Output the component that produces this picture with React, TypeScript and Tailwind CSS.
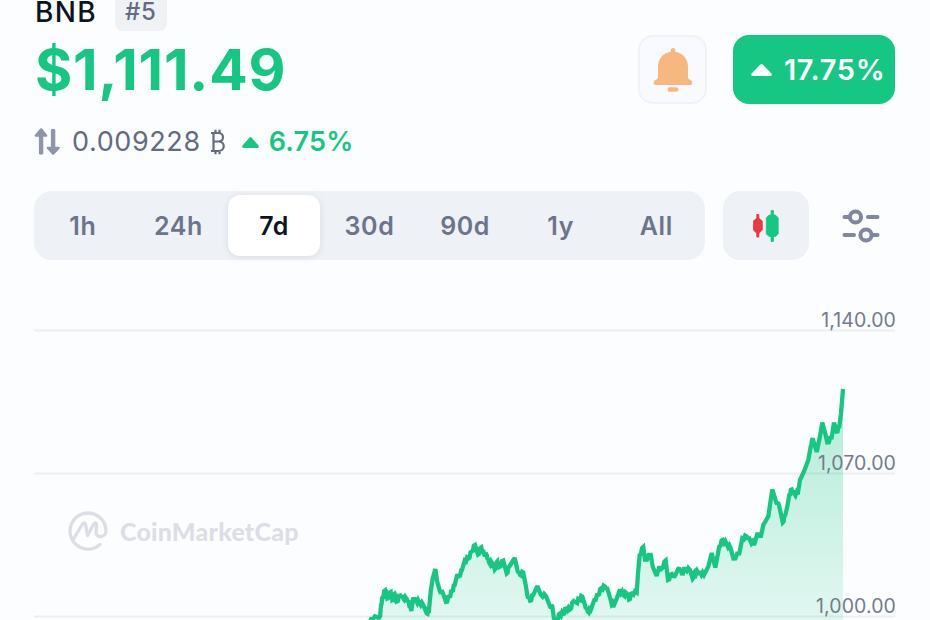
import { useState } from "react";

const ranges = ["1h", "24h", "7d", "30d", "90d", "1y", "All"];

const gridLines = [
  { label: "1,140.00", y: 330 },
  { label: "1,070.00", y: 473 },
  { label: "1,000.00", y: 616 },
];

const pricePoints = [
  "369,618.5 378,617.5 380,617.5 381,605 382.7,597 385,590.5 387.3,598.5 390.7,592 392.3,600 394.3,594 396.7,601.5 400,595.5",
  "402.7,597.5 406.7,599 409,603.5 411.3,611 413.3,597.5 416,600.5 419.3,602.5 423.3,605 426.7,613.5 429,610 430.7,591.5 432.7,578.5",
  "435.3,569 437.3,582 440,591.5 442.7,592.5 446,602 449.3,596.5 452,591 454.7,585 457.3,574.5 459.3,576 462,570 464.7,560.5",
  "468.3,558.5 471.7,551.5 475,545 478,554.5 481.3,547.5 484,554 486.7,555 489,562.5 492.3,563.5 494.7,569.5 497.3,561.5 499.3,567",
  "503.3,560.5 506.7,573.5 509.3,566.5 514.7,558 517.3,569.5 520,575 523.3,572.5 525.7,585 527.3,595 530,600.5 533.3,595 537.3,586",
  "540.7,594.5 546,596 550,606.5 552.3,606.5 554,618.5 556.7,620.5 560,613.5 563.3,614 566,608.5 570,609.5 573.3,601.5 576,602.5",
  "579.3,599.5 582.3,596.5 585,605 587.7,611.5 590.7,610 594.3,600 598.3,595 601,588.5 605,586.7 607.7,590 610.7,600 613.3,607",
  "616.7,598.5 620,589.5 623.3,595 626.7,593.5 629,599.5 631.7,593.5 636.7,592.5 638,573.5 639.7,555 643.3,547 645,559.5 650.7,555",
  "652.7,566.5 656.7,576 659.3,566.5 661.7,568.5 665.7,560.5 668,580 671.7,574 674,577.5 679,567.5 681.7,573.5 685,569 690,570",
  "692.7,579 695,571.5 698.3,573.5 700,572.3 704,575 708.3,566.5 711.7,553 715.3,567.5 719.3,546.5 722.7,540 726.7,544 730.7,548.5",
  "733.3,558.5 739.3,553.5 742.3,538.5 746.7,536.5 750,540 754,545 757.7,533 760.7,537.5 763.3,525 768.3,516.5 770.7,500 772.3,489.5",
  "776,501.5 779,505 782.7,522.5 785.3,515 787.3,506.5 789.3,495 791.7,489.5 794.3,493.5 797.7,494.5 800,480 804,471.5 808.3,460",
  "810.7,446.5 812.7,438.5 816.7,452 820,436.5 822.3,422.5 825.3,433.5 827.3,442.5 831.7,437.5 834,422.5 836.7,431.5 839.3,426.5 841,413.5 843,389",
]
  .join(" ")
  .split(" ")
  .map((pair) => pair.split(",").map(Number));

// intraday noise between the sampled prices
const linePoints = pricePoints
  .flatMap(([x, y], i) => {
    const next = pricePoints[i + 1];
    if (!next || Math.abs(next[1] - y) > 8) {
      return [`${x},${y}`];
    }
    const dx = next[0] - x;
    const dy = next[1] - y;
    return [
      `${x},${y}`,
      `${x + dx * 0.35},${y + dy * 0.35 + 1.6}`,
      `${x + dx * 0.65},${y + dy * 0.65 - 1.6}`,
    ];
  })
  .join(" ");

function UpTriangle({ className }: { className: string }) {
  return (
    <svg viewBox="0 0 20 12" className={className} fill="currentColor" preserveAspectRatio="none">
      <path d="M8.8.6Q10-.4 11.2.6L19.4 9.4Q20.6 11.5 18.4 12H1.6Q-.6 11.5.6 9.4Z" />
    </svg>
  );
}

function BellIcon() {
  return (
    <svg viewBox="0 0 40 44" className="h-11 w-10" fill="#f6b87e">
      <path d="M20 0c1.5 0 2.2 1 2.2 2.2v1.5C30 5 35 11 35 18.5V29c0 1.3.4 2 1.6 2.6l1.4.7c1.5.8 2 4.7-.4 4.7H2.4c-2.4 0-1.9-3.9-.4-4.7l1.4-.7C4.6 31 5 30.3 5 29V18.5C5 11 10 5 17.8 3.7V2.2C17.8 1 18.5 0 20 0z" />
      <rect x="14.5" y="39.3" width="11" height="4.5" rx="2.25" />
    </svg>
  );
}

function SwapIcon() {
  return (
    <svg viewBox="0 0 27 28" className="h-7 w-[27px]" fill="#8e95aa">
      <path d="M6.2.6q.9-.8 1.8 0l5 6.2q1.1 2-.9 2H9.3v16.4q0 1.3-1.3 1.3H6.2q-1.3 0-1.3-1.3V8.8H2Q0 8.800 1.1 6.8z" />
      <path d="M18.2 1h1.8q1.3 0 1.3 1.3v16.4h3.2q2 0 .9 2l-5.3 5.7q-.9.8-1.8 0L13.1 20.7q-1.1-2 .9-2h2.9V2.3Q16.9 1 18.2 1z" />
    </svg>
  );
}

function BitcoinSign() {
  return (
    <svg viewBox="0 0 16 26" className="h-[26px] w-4" fill="none" stroke="#646b80" strokeWidth="2.2">
      <path d="M1 4H8.5C14.5 4 14.5 12.5 8.5 12.5H3.5M8.5 12.5C15.5 12.5 15.5 22 8.5 22H1M3.5 4V22M5.5.8V4M9.5.8V4M5.5 22v3.2M9.5 22v3.2" />
    </svg>
  );
}

function CandleIcon() {
  return (
    <svg viewBox="0 0 26 32" className="h-8 w-[26px]">
      <g fill="#ea3943">
        <rect x="3.300" y="4" width="3" height="23.5" rx="1" />
        <path d="M3.5 8.5h2.6L9.3 11v9L6.1 23H3.5L.3 20v-9z" stroke="#ea3943" strokeLinejoin="round" strokeWidth=".8" />
      </g>
      <g fill="#16c784">
        <rect x="17.7" y="0" width="3.2" height="32" rx="1" />
        <path d="M16.3 5h6l2.900 2.800V24l-2.900 2.500h-6L13.300 24V7.800z" stroke="#16c784" strokeLinejoin="round" strokeWidth=".8" />
      </g>
    </svg>
  );
}

function SettingsIcon() {
  return (
    <svg
      viewBox="0 0 38 34"
      className="h-[34px] w-[38px]"
      fill="none"
      stroke="#7f879d"
      strokeWidth="4"
      strokeLinecap="round"
    >
      <path d="M2.5 8H7M26 8h9.5M2.5 26H12M30 26h5.5" />
      <circle cx="13.5" cy="8" r="5.6" />
      <circle cx="24" cy="26" r="5.6" />
    </svg>
  );
}

function Watermark() {
  return (
    <div className="absolute top-[241px] left-[68px] flex items-center gap-3 text-[#dcdee6]">
      <svg viewBox="0 0 40 40" className="size-10" fill="none" stroke="currentColor" strokeWidth="3.3" strokeLinecap="round" strokeLinejoin="round">
        <path d="M32 33.5A18 18 0 1 1 38 19.5C38.3 26.5 28.5 28 28 21.5L28.5 13.5C28.5 11.5 26.8 11.3 25.8 13L19.5 24.5 17.5 13.5C17 11.5 15.5 11.5 14.5 13L5.5 28" />
      </svg>
      <span className="font-['Lato'] text-[25px] leading-10 font-black tracking-[0.2px]">
        CoinMarketCap
      </span>
    </div>
  );
}

function PriceChart() {
  return (
    <section className="relative h-[350px] shrink-0">
      <Watermark />
      <svg viewBox="0 270 930 350" className="absolute inset-0 h-full w-full">
        <defs>
          <linearGradient id="priceFill" gradientUnits="userSpaceOnUse" x1="0" y1="389" x2="0" y2="650">
            <stop offset="0" stopColor="#16c784" stopOpacity="0.32" />
            <stop offset="1" stopColor="#16c784" stopOpacity="0.09" />
          </linearGradient>
        </defs>
        <polygon points={`369,640 ${linePoints} 843,640`} fill="url(#priceFill)" />
        {gridLines.map((line) => (
          <path key={line.label} d={`M34 ${line.y + 0.5}H895`} stroke="#8087a0" strokeOpacity="0.12" strokeWidth="2" />
        ))}
        <polyline points={linePoints} fill="none" stroke="#16c784" strokeWidth="4.3" strokeLinejoin="miter" strokeMiterlimit="2.5" />
      </svg>
      {gridLines.map((line) => (
        <span
          key={line.label}
          className="absolute right-[34px] text-[19.5px] leading-5 tracking-[0.1px] text-[#737b8b]"
          style={{ top: line.y - 290 }}
        >
          {line.label}
        </span>
      ))}
    </section>
  );
}

export default function App() {
  const [range, setRange] = useState("7d");

  return (
    <main className="flex h-[620px] w-[930px] flex-col overflow-hidden bg-[#fcfdff] font-['Inter',sans-serif]">
      <header className="flex h-[170px] shrink-0 items-start justify-between pr-[35px] pl-[34px]">
        <div>
          <div className="flex h-[31px] items-start gap-[18px] pl-px">
            <span className="text-[28px] leading-6 font-medium tracking-[1.3px] text-[#0d1421]">BNB</span>
            <span className="flex h-[31px] w-[52px] items-start justify-center rounded-b-lg bg-[#eff2f5] text-[24px] leading-6 font-medium tracking-[0.8px] text-[#646b80]">
              #5
            </span>
          </div>
          <h1 className="mt-1 pl-px text-[57px] leading-[70px] font-bold tracking-[0.8px] text-[#16c784]">
            $1,111.49
          </h1>
          <div className="mt-[21px] flex h-8 items-center">
            <SwapIcon />
            <span className="ml-[11px] text-[27px] tracking-[0.6px] text-[#646b80]">0.009228</span>
            <span className="ml-[9px]">
              <BitcoinSign />
            </span>
            <UpTriangle className="ml-[16px] h-[11px] w-[17px] text-[#16c784]" />
            <span className="ml-[10px] text-[27px] font-semibold tracking-[0.2px] text-[#16c784]">6.75%</span>
          </div>
        </div>

        <div className="mt-[35px] flex gap-[26px]">
          <button
            type="button"
            aria-label="Price alert"
            className="flex size-[69px] items-center justify-center rounded-[15px] border-2 border-[#f1f2f7] bg-[#f9faff]"
          >
            <BellIcon />
          </button>
          <div className="flex h-[69px] w-[162px] items-center rounded-[16px] bg-[#16c784] pl-[18px] text-white">
            <UpTriangle className="h-3 w-[21px]" />
            <span className="ml-[12px] text-[29px] font-semibold tracking-[0.6px]">17.75%</span>
          </div>
        </div>
      </header>

      <nav className="flex h-[100px] shrink-0 items-start px-[34px] pt-[21px]">
        <div className="flex h-[69px] w-[671px] rounded-[18px] bg-[#eef1f5] px-px py-1">
          {ranges.map((item) => (
            <button
              key={item}
              type="button"
              onClick={() => setRange(item)}
              className={
                item === range
                  ? "mx-[2px] flex-1 rounded-xl bg-white pt-[2px] text-[25px] font-semibold tracking-[0.3px] text-[#0d1421] shadow-[0_1px_6px_rgba(100,110,140,0.16)]"
                  : "mx-[2px] flex-1 rounded-xl pt-[2px] text-[25px] font-semibold tracking-[0.6px] text-[#6c748a]"
              }
            >
              {item}
            </button>
          ))}
        </div>
        <button
          type="button"
          aria-label="Candlestick chart"
          className="ml-[18px] flex h-[69px] w-[86px] items-center justify-center rounded-[17px] bg-[#eef1f5]"
        >
          <CandleIcon />
        </button>
        <button type="button" aria-label="Chart settings" className="ml-[33px] flex h-[69px] items-center">
          <SettingsIcon />
        </button>
      </nav>

      <PriceChart />
    </main>
  );
}
